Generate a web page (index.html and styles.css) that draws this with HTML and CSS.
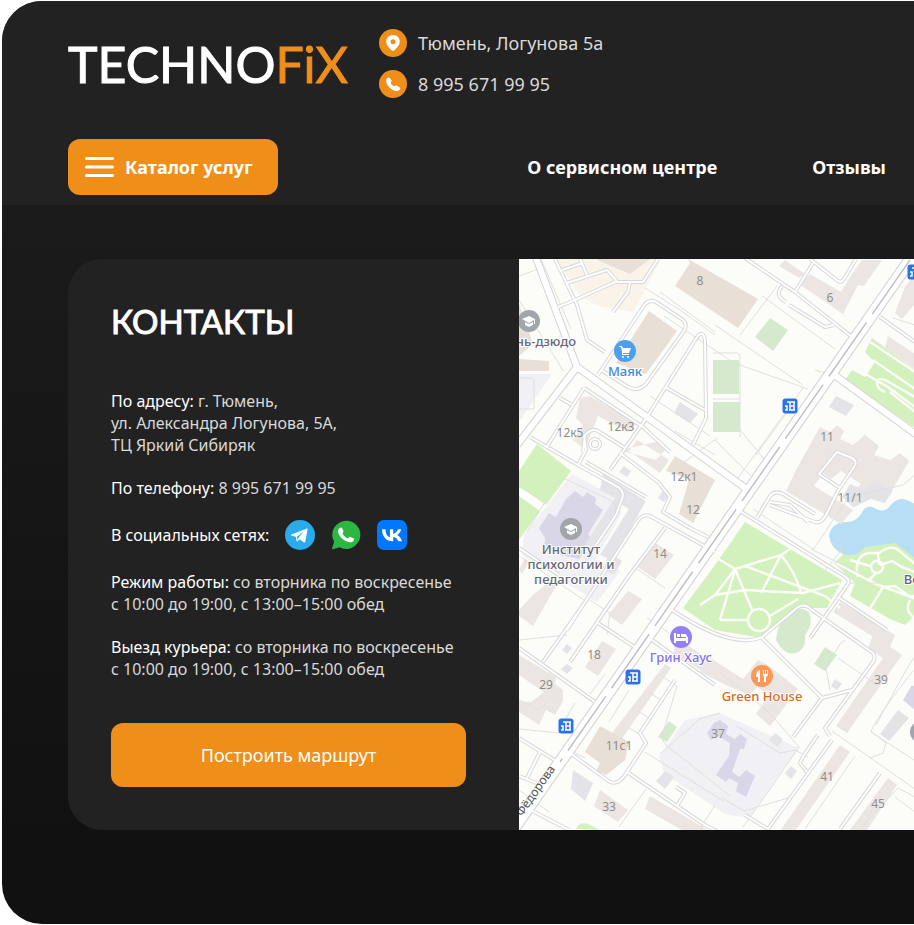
FILE: index.html
```html
<!DOCTYPE html>
<html lang="ru">
<head>
    <meta charset="UTF-8">
    <meta name="viewport" content="width=device-width, initial-scale=1.0">
    <title>TECHNOFiX - Контакты</title>
    <link rel="stylesheet" href="styles.css">
</head>
<body>
    <div class="page">
        <header class="header">
            <div class="header-top">
                <a href="#" class="logo">TECHNO<span class="logo-accent">FiX</span></a>
                <div class="header-contacts">
                    <a href="#map" class="header-contact">
                        <svg class="contact-icon" viewBox="0 0 28 28" aria-hidden="true">
                            <circle cx="14" cy="14" r="14" fill="#ef8e19"/>
                            <path fill="#fff" fill-rule="evenodd" d="M14 6c-3.900 0-6.800 2.900-6.800 6.500 0 3.600 3.400 6.900 5.800 9 .6.500 1.400.5 2 0 2.400-2.100 5.800-5.400 5.800-9C20.800 8.900 17.900 6 14 6zm0 4.200a2.500 2.500 0 1 1 0 5 2.500 2.500 0 0 1 0-5z"/>
                        </svg>
                        Тюмень, Логунова 5а
                    </a>
                    <a href="tel:89956719995" class="header-contact">
                        <svg class="contact-icon" viewBox="0 0 28 28" aria-hidden="true">
                            <circle cx="14" cy="14" r="14" fill="#ef8e19"/>
                            <path fill="#fff" d="M8.300 8.200c.8-.8 1.800-1 2.500-.1l1.400 1.900c.5.700.4 1.400-.1 2l-.5.700c.8 1.700 2.100 2.900 3.700 3.600l.9-.5c.6-.4 1.200-.4 1.800 0l2.500 1.500c.8.500 1 1.200.5 2-1 1.500-2.500 2.200-4.300 1.800-4.600-1.100-8.300-4.500-9.400-9-.4-1.500 0-2.900 1-3.900z"/>
                        </svg>
                        8 995 671 99 95
                    </a>
                </div>
            </div>
            <div class="header-bottom">
                <button class="catalog-button" type="button">
                    <svg class="menu-icon" viewBox="0 0 29 20" aria-hidden="true">
                        <path stroke="#fff" stroke-width="3" stroke-linecap="round" d="M1.500 1.500h26M1.500 10h26M1.500 18.500h26"/>
                    </svg>
                    Каталог услуг
                </button>
                <nav class="nav">
                    <a href="#">О сервисном центре</a>
                    <a href="#">Отзывы</a>
                </nav>
            </div>
        </header>

        <main class="card">
            <section class="info">
                <h1 class="info-title">КОНТАКТЫ</h1>
                <div class="info-list">
                    <p><b>По адресу:</b> г. Тюмень,<br>ул. Александра Логунова, 5А,<br>ТЦ Яркий Сибиряк</p>
                    <p><b>По телефону:</b> <a href="tel:89956719995">8 995 671 99 95</a></p>
                    <div class="socials">
                        <b>В социальных сетях:</b>
                        <a href="#" aria-label="Telegram">
                            <svg viewBox="0 0 30 30">
                                <circle cx="15" cy="15" r="15" fill="#2aabee"/>
                                <path fill="#fff" d="M6.500 14.600 21.300 8.700c.9-.3 1.500.2 1.200 1.400l-2.200 11.300c-.2 1.100-.9 1.300-1.700.8l-4-3-2 2c-.4.400-.9.400-1-.2l-.9-4.200-4.200-1.300c-.8-.3-.8-.7 0-.9z"/>
                                <path fill="#2aabee" d="m11.700 17 7.200-5.400-5.300 6-.9 2.700z"/>
                            </svg>
                        </a>
                        <a href="#" aria-label="WhatsApp">
                            <svg viewBox="0 0 30 30">
                                <path fill="#2cb742" d="M15.200.7a14.100 14.100 0 1 1-6.500 26.600L.8 29.600l2.300-7.800A14.100 14.100 0 0 1 15.200.7z"/>
                                <path fill="#fff" d="M8.500 8.300c1.200-1.300 2.300-.9 2.800.1l1.100 2.500c.3.600.1 1.100-.3 1.600l-.7 1c1.300 2.300 3 3.900 5.400 5l1.300-1.300c.5-.5 1-.5 1.600-.2l2.600 1.300c.8.400.9 1 .5 1.900-.8 1.800-2.900 2.500-5 1.900-5.100-1.200-8.700-4.500-10.500-9-.8-1.900-.2-3.400 1.200-4.800z"/>
                            </svg>
                        </a>
                        <a href="#" aria-label="ВКонтакте">
                            <svg viewBox="0 0 30 30">
                                <rect width="30" height="30" rx="7" fill="#07f"/>
                                <path fill="#fff" d="M15.800 21.300C9 21.300 5.200 16.700 5 9.300h3.500c.1 5.300 2.500 7.600 4.400 8.100V9.300h3.300v4.600c1.900-.2 4-2.300 4.700-4.600h3.300c-.5 2.800-2.600 4.900-4.100 5.800 1.500.7 3.900 2.600 4.800 6.200h-3.600c-.8-2.200-2.500-4-5.100-4.200v4.200z"/>
                            </svg>
                        </a>
                    </div>
                    <p><b>Режим работы:</b> со вторника по воскресенье<br>с 10:00 до 19:00, с 13:00–15:00 обед</p>
                    <p><b>Выезд курьера:</b> со вторника по воскресенье<br>с 10:00 до 19:00, с 13:00–15:00 обед</p>
                </div>
                <a href="#map" class="route-button">Построить маршрут</a>
            </section>

            <div class="map" id="map">
                <svg viewBox="519 259 395 571" preserveAspectRatio="xMinYMin slice" role="img" aria-label="Карта">
                    <defs>
                        <g id="stop">
                            <rect x="-7.500" y="-7.500" width="15" height="15" rx="3" fill="#2a72e5"/>
                            <path fill="none" stroke="#fff" stroke-width="1.500" d="M-3-4h8M0-4v8M4-4v8M0 0h4M-1 4h6M-5 0h2v4h-2"/>
                        </g>
                        <g id="school">
                            <circle r="11" fill="#a3a5ad"/>
                            <path fill="#fff" d="m-7-2 7-3 6 3v5H5v-4L0 2zM-4 1l4 2 4-2v3L0 6l-4-2z"/>
                        </g>
                        <g id="streets">
                            <path d="m535 255 42 112 70 50 101 73M577 367l-60 78M833 374l84 61"/>
                        </g>
                        <path id="main-street" d="M917 250 512 831"/>
                        <g id="lanes">
                            <path d="m558 307 17-7 40-18h28l15-23M630 283l-2 9-15 20M567 283l40-13 10 11M555 259l22 46 10 35 18 12M562 270l21-7M580 259l7 16"/>
                            <path d="m598 375 47-71q5-5 11-2l27 18q5 5 1 11l-38 53q-8 8-18 3l-27-17M647 417l50-80q6-8 8 3l1 78-13 27M665 387l40 23M560 398l12 7M584 388l59 39 27 25M584 388l-38 60"/>
                            <path d="m530 437 48 28 40 22q7 5 4 12l-6 16-28 42M583 452l2-17q8-9 16-2l24 15M578 465l8-15-2-15M647 417l-37 53M620 453l38 29 12 15-7 15 27 16 18 9M715 552l-25-14-40-22q-7-3-13 6l-70 108M586 462l60 35M665 528l-37 49-58 85M588 598l-45 64M598 623l38 25M519 548l40 27"/>
                            <circle cx="595" cy="444" r="5"/>
                            <path d="m519 648 76 54M519 738l37 23M540 752l-13 26M519 776l17 7M570 753l40 29q8 3 15-7l21-32-6-10 35-53M627 772l78 53 15 8M676 787l9 6-8 13M652 640l63 45M519 804l50 26"/>
                            <path d="m740 511 106 66q4 3 2 7l-38 54M672 610q60 40 90 27l36-30q7-4 14 3l61 43q3 4 0 9l-48 66 5 8M762 638l60 60-29 39M822 698l30-8M832 740l-64 89M818 735q-16 22-18 28l7 9M880 773l-40 56M745 815l23 14M838 597l49 33"/>
                            <path d="m757 518 13-22q5-6 13-2l32 20M770 502l20 3 18 17M770 505l45 17q6 2 11-7l12-24 16-24q4-6-2-9l-15-6-18 22 21 14M745 258l50 34 57 45M795 292l18-29M810 259l28 22q4 2 6-2l12-20M782 286q-8 10 4 16M789 305l36 22 9-2M880 317l35 25"/>
                        </g>
                    </defs>

                    <rect x="519" y="259" width="395" height="571" fill="#fcfcf8"/>

                    <!-- кварталы -->
                    <path fill="#faf3e9" d="M556 259h105l-28 53-34-6-18-9z"/>
                    <g fill="#f1f0f5">
                        <path d="M519 374h33l-33 48z"/>
                        <path d="m572 474 47 25 2 15-25 45 24 12-23 31-75-47 2-20z"/>
                        <path d="m659 757 26-37 34-7 80 35-50 70-24-4-60-40z"/>
                    </g>

                    <!-- парки -->
                    <g fill="#d3f1bc">
                        <path d="m537 444 34 27-25 34-27-19v-15zM519 496l21 15-21 29z"/>
                        <path d="m745 522 97 58-15 28-29 0-36 30-47-8-32-22 32-43z"/>
                        <path d="m872 338 43 32v58l-70-48 7-10 13 7 10-15-10-10z"/>
                        <path d="m834 563 15-14 29-9 17-3 20 13v65l-10 10-15-6-40-23 5-13z"/>
                        <path d="M576 829q3-8 12-5l12 6z"/>
                    </g>
                    <g fill="#d5e9cc">
                        <path d="M713 360h26v34h-26zM713 402h27v30h-27z"/>
                        <path d="m770 318 18 12-15 21-18-14zM825 647l12 8-12 16-11-7zM669 721l8 6-10 15-9-5z"/>
                        <path d="M777 634q3-16 12-22 10-7 20 0 5 12-4 23 1 15-9 18-12 3-20-13z"/>
                    </g>
                    <path fill="#b7def5" d="M829 536q2-13 16-14 10 1 16-8 5-11 14-6 8 6 14-1 9-12 20-6l6 3v54l-20-15-30 4q-8 11-22 7-12-5-14-18z"/>

                    <!-- дома -->
                    <g fill="#ece6e3">
                        <path d="m580 398 10-2 47 27-9 9-30-16-13 33-12-9 10-15-7-7z"/>
                        <path d="m637 440 32 20-9 13-31-22zM620 450l36 10 12-13-12-5z"/>
                        <path d="m654 542 20 13-19 24-17-12zM628 591l14 8-20 26-14-10zM602 641l14 8-18 27-13-9z"/>
                        <path d="m785 260 20 14-6 4-20-12zM810 274l31 18 9-15 12-17h20l-18 26-6-1-15 29-44-30z"/>
                        <path d="m796 470 24-43 10 5 7-7 7 6-4 8 13 6 12-10 14 11-5 9 16 5 10-7 9 8-20 35-11-7-25 18-8-7 16-16-20-13-10 8-8-6-9 13 39 24-12 14-55-33z"/>
                        <path d="m888 336 27 18v15l-30-21zM905 287l10-13v30l-13 15-7-6z"/>
                        <path d="m519 655 37 22-1 7 8 6 0 11-8 14-9-5-7 15-20-13v-11l12 1 13-10-25-17zM519 610l14-15 15-12 8 3-23 40-14-10z"/>
                        <path d="m665 664 6 4-50 72-9-7zM600 790l28 20-10 12-24-16zM650 796l65 38h-26l-44-25z"/>
                        <path d="m715 661 28 18 15-19 10 5 30 24-28 37-14-12 14-20-13-7-7 8-22-9-28-14 12-14zM873 635l29 20-55 78-11-7 47-68-15-10z"/>
                        <path d="m840 745 10 7-55 79h-15zM888 778l9 7-30 45h-17zM840 602l55 33-5 12-57-35z"/>
                        <path d="M519 570l6-12 4 4-7 12z"/>
                        <path d="m675 636 45 32-6 11-40-26z"/>
                    </g>
                    <g fill="#e8dfd6">
                        <path d="m688 259 70 40-20 29-63-42 15-23zM649 311l28 20-31 43-30-11zM519 359l30 2v10h-30zM519 304l14 40-14 12zM595 259h55l-20 15z"/>
                        <path d="m675 456 40 24-22 43-14-9 6-20 4-15-23-8zM600 726l29 16-4 18-19 15-10-4 4-8-15-11z"/>
                    </g>
                    <g fill="#d9d6e8">
                        <path d="m575 491 8 6 4-5 9 6-1 6 8 6-15 24 4 7-13 18-35-8 1-13-6-10 10-15 7 4 10-18z"/>
                        <path d="m720 720 8 6-2 8 9 5 5-5 7 5-3 10-4 0-8 23 7 5 7-7 9 6-9 21-10-6 2-8-9-5-3 4-10-7 13-19 1-13-12-7-7 4-4-7 7-10z"/>
                        <path d="m912 685 3 2v23l-12-10z"/>
                    </g>
                    <g fill="#e3e3e8">
                        <path d="m603 474 43 27-31 55 7 5-8 14-10-5 3-12-7-3 29-46-8-5-32 47-5-5 31-48-15-8zM680 402l18 12-8 9-16-10zM836 396l18 9-8 11-17-9zM624 466l7 5-4 6-8-5zM663 491l6 5-5 6-6-4z"/>
                        <path d="m842 497 8-13 15 6 7-8 21 8-8 13-14-4-17 8zM573 770l20 13-8 18-14-12zM665 771l9 6-9 12-9-8zM898 710l11 8-20 23-9-7zM567 644l5 4-5 6-5-4zM567 664l6 4-6 6-6-5zM775 733l8 6-5 8-9-7zM791 766l6 5-6 8-6-6zM835 679l7 5-5 6-6-4z"/>
                    </g>

                    <!-- дорожки в парках -->
                    <g fill="none" stroke="#fcfcf8" stroke-width="2.500">
                        <path d="m700 605 15-10 20-26-23-14M735 569l46-14 12-8M735 569l18 43M745 566l80 30 15 12M781 555l-20 38M781 555q15 18 20 38M715 595l30-5 58 3 37-10M720 620l15-50M720 620l27 0M770 616l28-17"/>
                        <circle cx="759" cy="620" r="11"/>
                        <path d="m836 563 40 21 40 15M858 577q-5-20 10-24l10 0 1 12M850 560l20 6M879 553q10-8 18-4l18 15M880 565l12-4 10 6 13 5M868 612l15-25 12-1 14 10 6 0M876 573l-8 8M910 600q-6 12 5 18"/>
                        <circle cx="877" cy="567" r="6"/>
                        <path d="m870 342 45 30M873 360l42 29M862 372l26 15 27 20M915 397l-30-17q-8-3-8 3 0 6 8 9M890 392l25 20"/>
                    </g>

                    <!-- тонкие границы -->
                    <g fill="none" stroke="#dfdfdd" stroke-width="1">
                        <path d="m519 276 22-8M519 300l45 72M541 259l30 70M645 288l35 22 35 25M660 292l55 40M664 316l70 47 74 26M715 325l88 60M740 335l37-49M762 296l73 53M713 353h24q3 0 3 4v80M713 399h27M740 430l25 30M803 388l-65 90M756 455l40-55M815 370l28 8M893 318l22 7M848 345l30-46M715 440l40 40M679 466l38-28"/>
                        <path d="M519 378h13q2 0 2 3v28h-15M527 532l30-50q8-5 15 0l38 18q9 4 4 16l-34 53M519 487l22 12M519 556l35 24 30 20M590 600l20 13-3 22M519 640l48-5M647 618l22 15M637 569l28 19M715 455l-40-24M650 396l60 40M753 509l60 40M813 550l35-52 28-7 27-6 12-10M832 543l11 5-30 38M811 549l50 25M848 583h34"/>
                        <path d="m590 694 15-20M575 703l-10 17-5 13-41-4M609 722l20-32M629 728l13 8M638 711l14 9M650 693l14 9M663 677l14 9-12 40q-6 12 1 19l64 51M645 752l80 50M646 789l-27 38M660 754l40-35 20-6M719 672l50 40 30 35-26 38-30 42M735 725l45 28 15-3 13 7M519 700l20 10 15-15M830 690l-4-22 14-24 5-4M838 658l38 26M876 725l30-55 9-14M871 732l43 28M870 758l13-5 3-10-15-12q10-20 42-60M832 731l83 58M805 829l50-73M895 797l20 15M860 828l38-40 17 9M721 797l23 14 44-13M519 790l30 22M575 753l10 5M700 829l15-24"/>
                    </g>

                    <!-- дороги: сначала контур, потом полотно -->
                    <use href="#lanes" class="road lane-edge"/>
                    <use href="#streets" class="road street-edge"/>
                    <use href="#main-street" class="road main-edge"/>
                    <use href="#lanes" class="road lane-fill"/>
                    <use href="#streets" class="road street-fill"/>
                    <use href="#main-street" class="road main-fill"/>
                    <path fill="none" stroke="#c0c0c2" stroke-width="1.500" stroke-dasharray="66 10" d="M910 260 560 762"/>

                    <!-- номера домов -->
                    <g class="map-number">
                        <text x="700" y="285">8</text>
                        <text x="830" y="302">6</text>
                        <text x="570" y="437">12к5</text>
                        <text x="621" y="431">12к3</text>
                        <text x="684" y="481">12к1</text>
                        <text x="693" y="514">12</text>
                        <text x="827" y="441">11</text>
                        <text x="850" y="502">11/1</text>
                        <text x="660" y="558">14</text>
                        <text x="594" y="659">18</text>
                        <text x="546" y="689">29</text>
                        <text x="619" y="750">11с1</text>
                        <text x="609" y="811">33</text>
                        <text x="718" y="738">37</text>
                        <text x="827" y="781">41</text>
                        <text x="878" y="808">45</text>
                        <text x="881" y="684">39</text>
                    </g>

                    <!-- метки -->
                    <use href="#stop" x="790" y="406"/>
                    <use href="#stop" x="633" y="677"/>
                    <use href="#stop" x="566" y="726"/>
                    <use href="#stop" x="915" y="272"/>
                    <use href="#school" x="529" y="321"/>
                    <use href="#school" x="571" y="529"/>
                    <use href="#school" x="921" y="732"/>
                    <g transform="translate(625 351)">
                        <circle r="11" fill="#4f9ff0"/>
                        <path fill="#fff" d="M-6-5h3l1 2h8L4 2h-6v1h6v1h-7v-3L-4-4h-2z"/>
                        <circle cx="-2" cy="6" r="1" fill="#fff"/>
                        <circle cx="3" cy="6" r="1" fill="#fff"/>
                    </g>
                    <g transform="translate(681 637)">
                        <circle r="11" fill="#9281f7"/>
                        <path fill="#fff" d="M-7-4h2v5H5v-1h2v6H5V4H-5v2h-2zM-4-3h3v3h-3zM0-3h4q2 0 2 3H0z"/>
                    </g>
                    <g transform="translate(762 676)">
                        <circle r="11" fill="#fb9857"/>
                        <path fill="#fff" d="M-2-6v12h-2V1h-2q0-6 4-7zM1-6h1v4h1v-4h1v4h1v-4h1v5L4 1v5H2V1L1-1z"/>
                    </g>
                    <g class="map-place">
                        <text x="546" y="346" fill="#646773">нь-дзюдо</text>
                        <text x="625" y="376" fill="#3b8ae6">Маяк</text>
                        <text x="571" y="554" fill="#646773">Институт</text>
                        <text x="571" y="569" fill="#646773">психологии и</text>
                        <text x="571" y="584" fill="#646773">педагогики</text>
                        <text x="681" y="662" fill="#8271ee">Грин Хаус</text>
                        <text x="762" y="701" fill="#d9691b">Green House</text>
                        <text x="912" y="584" fill="#646773">Во</text>
                    </g>
                    <text class="map-street" transform="translate(522 817) rotate(-55)">Фёдорова</text>
                </svg>
            </div>
        </main>
    </div>
</body>
</html>
```

FILE: styles.css
```css
* {
    margin: 0;
    padding: 0;
    box-sizing: border-box;
}

body {
    background: #fff;
    font-family: "Noto Sans", "Open Sans", sans-serif;
    padding: 1px 0 1px 2px;
}

a {
    color: inherit;
    text-decoration: none;
}

.page {
    background: linear-gradient(#1e1e1e, #111 90%);
    border-radius: 40px 0 0 40px;
    overflow: hidden;
    padding-bottom: 94px;
}

.header {
    background: #222;
    padding: 28px 28px 10px 66px;
}

.header-top {
    display: flex;
    align-items: flex-start;
    gap: 31px;
}

.logo {
    font-family: Lato, sans-serif;
    font-size: 50px;
    line-height: 70px;
    color: #fff;
    -webkit-text-stroke: 1px currentColor;
}

.logo-accent {
    color: #ef8e19;
}

.header-contacts {
    display: flex;
    flex-direction: column;
    gap: 13px;
}

.header-contact {
    display: flex;
    align-items: center;
    gap: 11px;
    font-size: 18px;
    line-height: 28px;
    color: #d9d9d9;
}

.contact-icon {
    width: 28px;
    height: 28px;
}

.header-bottom {
    display: flex;
    align-items: center;
    justify-content: space-between;
    margin-top: 40px;
}

.catalog-button {
    display: flex;
    align-items: center;
    gap: 11px;
    height: 56px;
    padding: 0 25px 0 17px;
    border: none;
    border-radius: 12px;
    background: #ef8e19;
    color: #fff;
    font-family: inherit;
    font-size: 18px;
    font-weight: 700;
    cursor: pointer;
}

.menu-icon {
    width: 29px;
    height: 20px;
}

.nav {
    display: flex;
    gap: 95px;
    font-size: 18px;
    font-weight: 700;
    color: #fff;
}

.card {
    display: flex;
    margin: 54px 0 0 66px;
    border-radius: 34px 0 0 34px;
    background: #222;
    overflow: hidden;
}

.info {
    flex: 0 0 451px;
    padding: 42px 53px 43px 43px;
}

.info-title {
    font-family: Lato, sans-serif;
    font-size: 33px;
    font-weight: 400;
    line-height: 40px;
    color: #fff;
    margin-bottom: 49px;
    -webkit-text-stroke: 1px currentColor;
}

.info-list {
    display: flex;
    flex-direction: column;
    gap: 21px;
    font-size: 16px;
    line-height: 22px;
    color: #d9d9d9;
}

.info-list b {
    font-weight: 400;
    color: #fff;
}

.socials {
    display: flex;
    align-items: center;
    gap: 16px;
}

.socials a,
.socials svg {
    display: block;
    width: 30px;
    height: 30px;
}

.route-button {
    display: block;
    margin-top: 43px;
    border-radius: 12px;
    background: #ef8e19;
    color: #fff;
    font-size: 18px;
    line-height: 64px;
    text-align: center;
}

.map {
    flex: 1;
    min-width: 0;
    position: relative;
}

.map > svg {
    position: absolute;
    width: 100%;
    height: 100%;
}

.road {
    fill: none;
    stroke: #fff;
    stroke-linejoin: round;
}

.lane-edge {
    stroke: #d8d8da;
    stroke-width: 4px;
}

.lane-fill {
    stroke-width: 2px;
}

.street-edge {
    stroke: #d4d4d6;
    stroke-width: 8px;
}

.street-fill {
    stroke-width: 6px;
}

.main-edge {
    stroke: #d0d0d3;
    stroke-width: 13px;
}

.main-fill {
    stroke-width: 11px;
}

.map-number {
    font-size: 12px;
    fill: #8d8d8d;
    text-anchor: middle;
}

.map-place {
    font-size: 13px;
    font-weight: 500;
    text-anchor: middle;
    stroke: #fff;
    stroke-width: 2px;
    paint-order: stroke;
}

.map-street {
    font-size: 12px;
    fill: #555;
}
```
